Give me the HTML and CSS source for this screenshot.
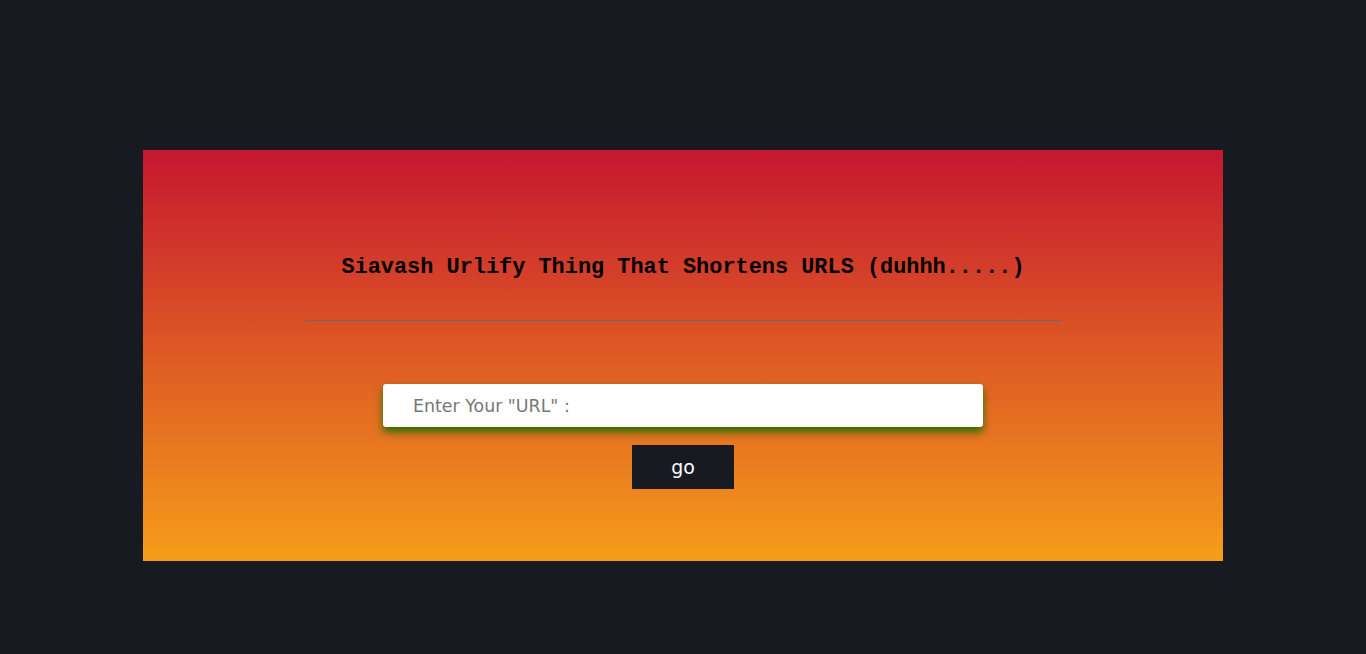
FILE: index.html
```html
<!DOCTYPE html>
<html>
<head>
<meta charset="utf-8">
<link rel="stylesheet" href="styles.css">
</head>
<body>
<main class="page">
  <section class="card">
    <h1 class="title">Siavash Urlify Thing That Shortens URLS (duhhh.....)</h1>
    <hr class="rule">
    <form class="form">
      <input class="url-input" type="text" placeholder="Enter Your &quot;URL&quot; :">
      <button class="go-btn" type="button">go</button>
    </form>
  </section>
</main>
</body>
</html>
```

FILE: styles.css
```css
html, body {
  margin: 0;
  padding: 0;
  background: #181a21;
  height: 100%;
}
.page {
  padding-top: 150px;
  display: flex;
  justify-content: center;
}
.card {
  width: 1080px;
  height: 411px;
  box-sizing: border-box;
  background: linear-gradient(to bottom, #c5172f 0%, #f69d1a 100%);
  display: flex;
  flex-direction: column;
  align-items: center;
  padding-top: 106px;
}
.title {
  margin: 0;
  font-family: "Liberation Mono", "Courier New", monospace;
  font-weight: bold;
  font-size: 21.9px;
  line-height: 24px;
  color: #000;
}
.rule {
  width: 756px;
  margin: 40px 0 0 0;
  border: 0;
  border-top: 1px solid #6a6a6a;
  height: 0;
}
.form {
  margin-top: 63px;
  display: flex;
  flex-direction: column;
  align-items: center;
}
.url-input {
  width: 600px;
  height: 43px;
  box-sizing: border-box;
  border: 0;
  border-radius: 3px;
  background: #fff;
  padding: 0 30px;
  font-family: "DejaVu Sans", "Noto Sans", sans-serif;
  font-size: 17.4px;
  color: #333;
  outline: none;
  box-shadow: 0 5px 8px #246d00;
}
.url-input::placeholder {
  color: #777;
}
.go-btn {
  margin-top: 18px;
  width: 102px;
  height: 44px;
  border: 0;
  background: #181a21;
  color: #fff;
  font-family: "DejaVu Sans", "Noto Sans", sans-serif;
  font-size: 19px;
  cursor: pointer;
}
```
